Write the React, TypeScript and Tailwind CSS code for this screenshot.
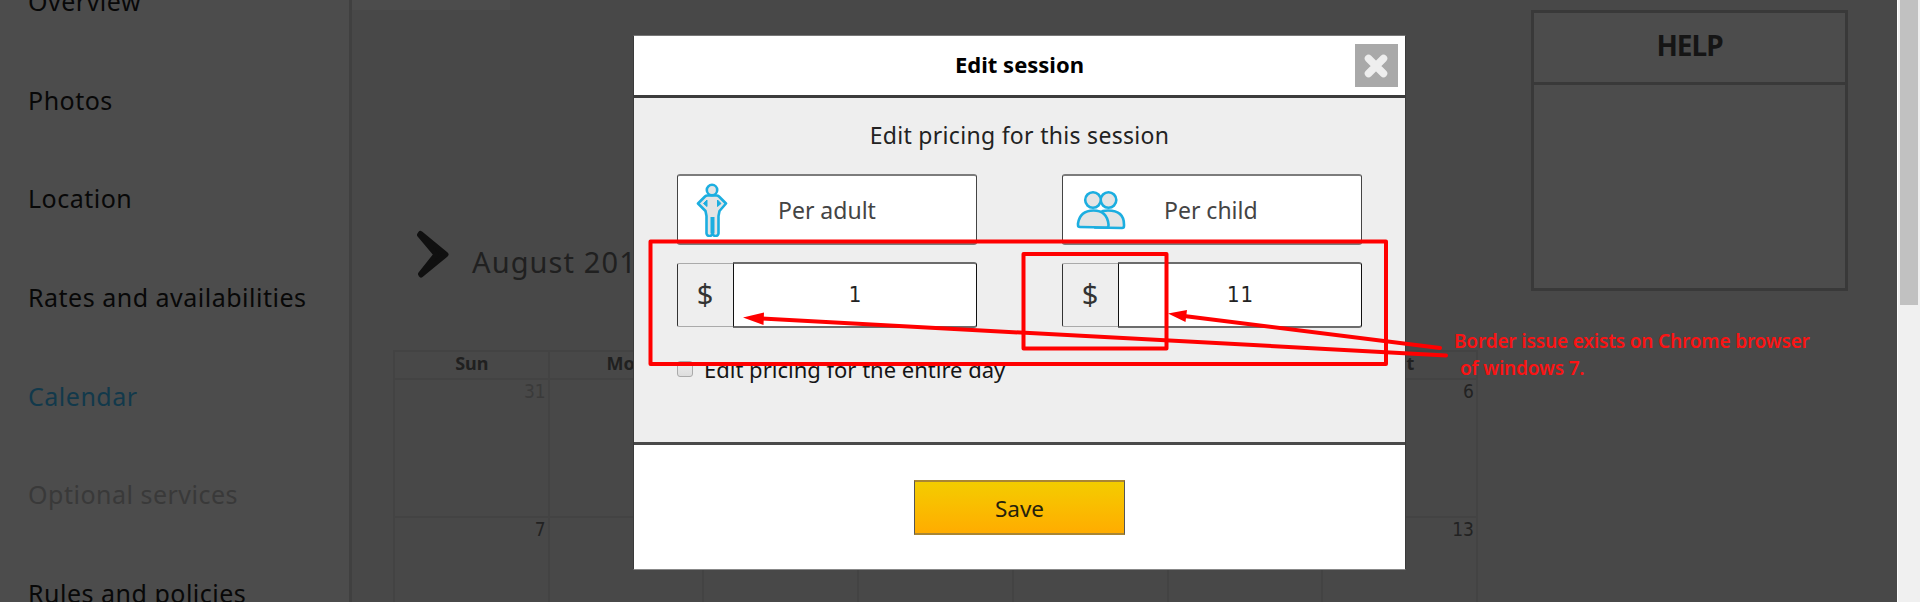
import React from "react";

type NavItem = { label: string; tone: string };

const navItems: NavItem[] = [
  { label: "Overview", tone: "text-[#080808]" },
  { label: "Photos", tone: "text-[#080808]" },
  { label: "Location", tone: "text-[#080808]" },
  { label: "Rates and availabilities", tone: "text-[#080808]" },
  { label: "Calendar", tone: "text-[#12394b]" },
  { label: "Optional services", tone: "text-[#393939]" },
  { label: "Rules and policies", tone: "text-[#080808]" },
];

const weekDays = ["Sun", "Mon", "Tue", "Wed", "Thu", "Fri", "Sat"];
const weeks = [
  [31, 1, 2, 3, 4, 5, 6],
  [7, 8, 9, 10, 11, 12, 13],
];

function Sidebar() {
  return (
    <aside className="h-full w-[352px] shrink-0 overflow-hidden border-r-[3px] border-[#404040] bg-[#4c4c4c]">
      <nav className="-mt-[47.8px] flex flex-col pl-7">
        {navItems.map((item) => (
          <a key={item.label} className={`h-[98.6px] whitespace-nowrap text-[25px] leading-[98.6px] tracking-[0.5px] ${item.tone}`}>
            {item.label}
          </a>
        ))}
      </nav>
    </aside>
  );
}

function Calendar() {
  return (
    <section className="w-[1085px]">
      <div className="grid grid-cols-7 border-l-2 border-t-2 border-[#434343]">
        {weekDays.map((d) => (
          <div key={d} className="h-7 border-b-2 border-r-2 border-[#434343] pl-px text-center text-[18px] font-bold leading-[23px] text-[#202020]">
            {d}
          </div>
        ))}
        {weeks.flat().map((n, i) => (
          <div
            key={i}
            className={`h-[138px] border-b-2 border-r-2 border-[#434343] pr-0.5 text-right font-['DejaVu_Sans_Condensed','DejaVu_Sans',sans-serif] text-[19px] font-stretch-condensed leading-[22px] ${
              n === 31 ? "text-[#3a3a3a]" : "text-[#222]"
            }`}
          >
            {n}
          </div>
        ))}
      </div>
    </section>
  );
}

function HelpBox() {
  return (
    <section className="flex h-[281px] w-[317px] flex-col border-[3px] border-[#393939] bg-[#4c4c4c]">
      <h2 className="h-[72px] border-b-[3px] border-[#393939] text-center text-[28px] font-bold leading-[64px] tracking-[-1px] text-[#151515]">HELP</h2>
    </section>
  );
}

function AdultIcon() {
  return (
    <svg className="h-[54px] w-8" viewBox="0 0 32 54" fill="#e4e4e4" stroke="#1caee0" strokeWidth="2.600" strokeLinejoin="round">
      <path d="M11.500 12.500h9q1.500 0 2.500 1l7 7-6.500 7.500-1 5v16.500a3 3 0 0 1-6 1 3 3 0 0 1-6-1V33l-1-5L2 20.500l7-7q1-1 2.500-1Z" />
      <path d="M16.500 34v16.500" strokeWidth="4" />
      <path d="m11 17-3.500 3.500 3.500 3ZM21.500 17l3.500 3.500-3.500 3Z" fill="#1caee0" strokeWidth="1" />
      <circle cx="16" cy="7" r="5.200" />
    </svg>
  );
}

function ChildIcon() {
  return (
    <svg className="h-[40px] w-[50px]" viewBox="0 0 50 40" fill="#e4e4e4" stroke="#1caee0" strokeWidth="2.600" strokeLinejoin="round">
      <path d="M19 37.500V29q2-8.500 13-8.500 16 0 16 14v1.500q0 2-2 2Z" />
      <circle cx="32.500" cy="10" r="7.800" />
      <circle cx="17" cy="10" r="7.800" />
      <path d="M4 37q-2 0-2-2v-1.500q2-13 15.500-13t15 14v1q0 2-2 2Z" />
    </svg>
  );
}

function PriceColumn({ label, value, icon, iconPad }: { label: string; value: string; icon: React.ReactNode; iconPad: string }) {
  return (
    <div className="w-[301px]">
      <div className="flex h-[71px] items-center rounded-[3px] border border-y-2 border-[#444] border-y-[#7c7c7c] bg-white">
        <div className={`flex shrink-0 ${iconPad}`}>{icon}</div>
        <span className="whitespace-nowrap text-[23px] leading-[70px] text-[#444]">{label}</span>
      </div>
      <div className="mt-[17px] flex h-[66px] items-center">
        <div className="flex h-[64px] w-[56px] items-center justify-center rounded-l-[2px] border border-r-0 border-[#333] border-y-[#aaa] bg-[#eee] pb-0.5 pr-px text-[29px] leading-8 text-[#333]">$</div>
        <div className="flex h-[66px] flex-1 items-center justify-center rounded-r-[3px] border-x border-y-2 border-[#111] border-y-[#6c6c6c] bg-white pb-px pl-px font-['DejaVu_Sans_Condensed','DejaVu_Sans',sans-serif] text-[22px] font-stretch-condensed tracking-[1px] text-[#222]">
          {value}
        </div>
      </div>
    </div>
  );
}

function SessionDialog() {
  return (
    <div role="dialog" className="absolute left-[633px] top-[35px] flex h-[535px] w-[773px] flex-col border border-[#3a3a3a] border-t-[#777] border-b-[#888] bg-[#eee]">
      <header className="flex h-[62px] items-center border-b-[3px] border-[#3c3c3c] bg-white">
        <h1 className="ml-[50px] flex-1 text-center text-[22px] font-bold leading-[57px] text-black">
          <span className="relative -top-px">Edit session</span>
        </h1>
        <button className="mr-[7px] flex h-[43px] w-[43px] shrink-0 items-center justify-center bg-[#a9a9a9] pr-[2px]">
          <svg className="h-6 w-6" viewBox="0 0 24 24" stroke="#eee" strokeWidth="7.500" strokeLinecap="round">
            <path d="m4.500 4.500 15 15M19.500 4.500l-15 15" />
          </svg>
        </button>
      </header>
      <div className="flex-1 px-[43px]">
        <p className="pt-[19px] text-center text-[23px] leading-9 tracking-[0.3px] text-[#222]">Edit pricing for this session</p>
        <div className="mt-[21px] flex gap-[85px]">
          <PriceColumn label="Per adult" value="1" icon={<AdultIcon />} iconPad="w-[100px] pl-[18px] pt-px" />
          <PriceColumn label="Per child" value="11" icon={<ChildIcon />} iconPad="w-[101px] pl-[13px]" />
        </div>
        <label className="mt-[23px] flex h-9 items-center whitespace-nowrap text-[22px] leading-9 text-[#151515]">
          <span className="mr-[11px] h-4 w-4 rounded-[3px] border border-[#aaa] bg-gradient-to-b from-[#eee] to-[#ddd]" />
          Edit pricing for the entire day
        </label>
      </div>
      <footer className="flex h-[127px] items-center justify-center border-t-[3px] border-[#4a4a4a] bg-white">
        <button className="h-[55px] w-[211px] border border-y-2 border-[#555] border-y-[#a98634] bg-gradient-to-b from-[#f3cc00] to-[#ffac00] text-[22.5px] leading-[53px] text-[#26210c]">
          Save
        </button>
      </footer>
    </div>
  );
}

function Annotations() {
  return (
    <>
      <svg className="absolute left-0 top-0 h-[602px] w-[1920px]" viewBox="0 0 1920 602" fill="none" stroke="#f00" strokeWidth="4" strokeLinejoin="round" strokeLinecap="round">
        <rect x="650.500" y="241.500" width="735.500" height="122.500" />
        <rect x="1023.500" y="254" width="143" height="94.500" />
        <path d="M1440 348 1184 316M1446 355.500 760 318.500" />
        <path d="m1168 313.500 19-3.500-1.500 12ZM743 317.500l21-5-.5 12.500Z" fill="#f00" stroke="none" />
      </svg>
      <p className="absolute left-[1454px] top-[328px] whitespace-pre text-[19px] font-semibold leading-[27px] tracking-[-0.15px] text-[#fa1414]">
        Border issue exists on Chrome browser{"\n"}
        <span className="pl-[6px]">of windows 7.</span>
      </p>
    </>
  );
}

export default function App() {
  return (
    <div className="relative flex h-[602px] w-[1920px] overflow-hidden bg-[#484848] font-['Noto_Sans',sans-serif]">
      <Sidebar />
      <main className="flex min-w-0 flex-1 justify-between pr-[49px]">
        <div className="flex flex-col">
          <div className="h-[10px] w-[158px] shrink-0 bg-[#4c4c4c]" />
          <div className="flex h-[340px] shrink-0 pl-[64px] pt-[220px]">
            <svg className="h-[50px] w-[36px]" viewBox="0 0 36 50" fill="#101010" stroke="#101010" strokeWidth="5" strokeLinejoin="round">
              <path d="M4.500 3.500 30 24.500 5 45 4.500 44 20 24.500 3.500 5Z" />
            </svg>
            <span className="ml-5 mt-[12px] whitespace-nowrap text-[29px] leading-10 tracking-[1.1px] text-[#202020]">August 2016</span>
          </div>
          <div className="shrink-0 pl-[41px]">
            <Calendar />
          </div>
        </div>
        <div className="-ml-[100px] shrink-0 pt-[10px]">
          <HelpBox />
        </div>
      </main>
      <div className="w-[23px] shrink-0 border-l border-[#fff] bg-[#f0f0f0] pl-0.5">
        <div className="h-[305px] w-[18px] bg-[#c1c1c1]" />
      </div>
      <SessionDialog />
      <Annotations />
    </div>
  );
}
